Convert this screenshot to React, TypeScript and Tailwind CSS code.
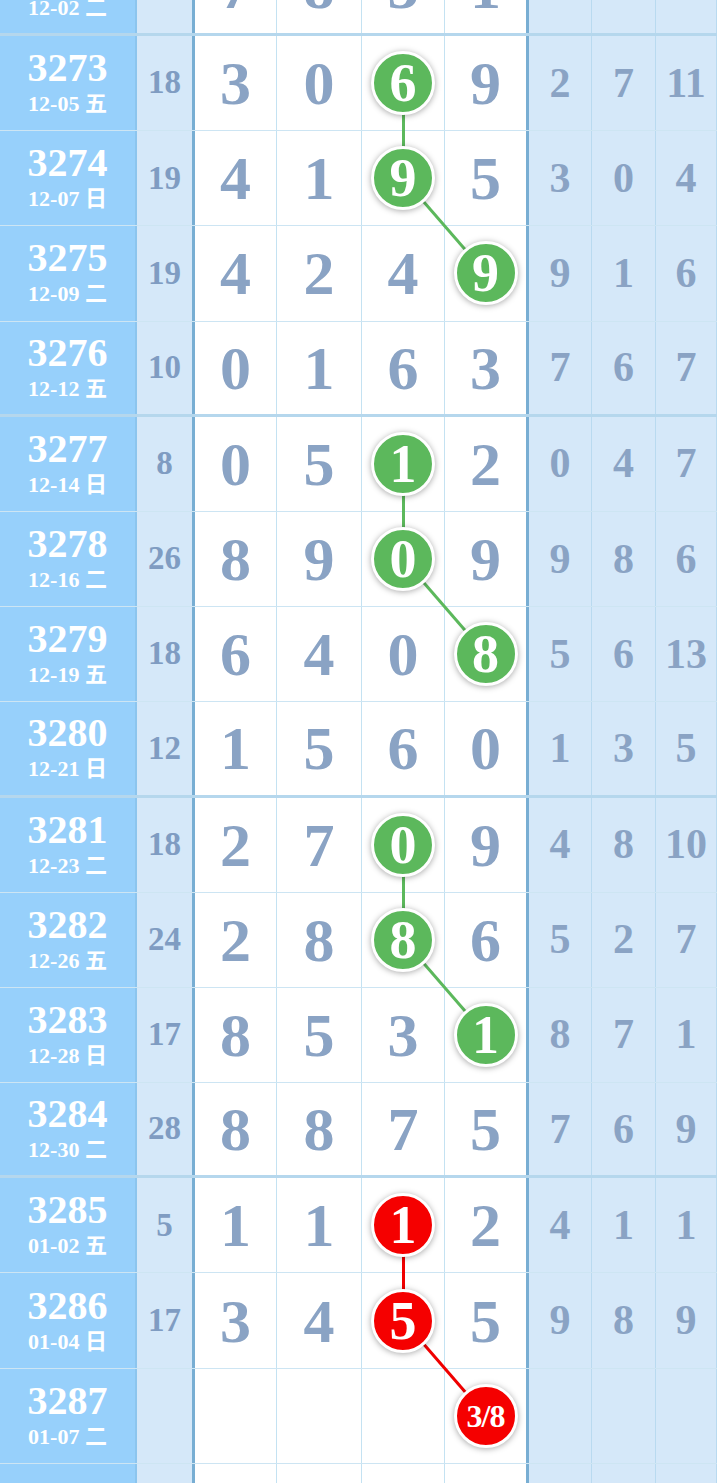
import React from 'react';

interface Row {
  no: string;
  date: string;
  sum: string;
  nums: string[];
  rest: string[];
}

const rows: Row[] = [
  { no: '3272', date: '12-02 二', sum: '', nums: ['7', '8', '3', '1'], rest: ['6', '3', '3'] },
  { no: '3273', date: '12-05 五', sum: '18', nums: ['3', '0', '6', '9'], rest: ['2', '7', '11'] },
  { no: '3274', date: '12-07 日', sum: '19', nums: ['4', '1', '9', '5'], rest: ['3', '0', '4'] },
  { no: '3275', date: '12-09 二', sum: '19', nums: ['4', '2', '4', '9'], rest: ['9', '1', '6'] },
  { no: '3276', date: '12-12 五', sum: '10', nums: ['0', '1', '6', '3'], rest: ['7', '6', '7'] },
  { no: '3277', date: '12-14 日', sum: '8', nums: ['0', '5', '1', '2'], rest: ['0', '4', '7'] },
  { no: '3278', date: '12-16 二', sum: '26', nums: ['8', '9', '0', '9'], rest: ['9', '8', '6'] },
  { no: '3279', date: '12-19 五', sum: '18', nums: ['6', '4', '0', '8'], rest: ['5', '6', '13'] },
  { no: '3280', date: '12-21 日', sum: '12', nums: ['1', '5', '6', '0'], rest: ['1', '3', '5'] },
  { no: '3281', date: '12-23 二', sum: '18', nums: ['2', '7', '0', '9'], rest: ['4', '8', '10'] },
  { no: '3282', date: '12-26 五', sum: '24', nums: ['2', '8', '8', '6'], rest: ['5', '2', '7'] },
  { no: '3283', date: '12-28 日', sum: '17', nums: ['8', '5', '3', '1'], rest: ['8', '7', '1'] },
  { no: '3284', date: '12-30 二', sum: '28', nums: ['8', '8', '7', '5'], rest: ['7', '6', '9'] },
  { no: '3285', date: '01-02 五', sum: '5', nums: ['1', '1', '1', '2'], rest: ['4', '1', '1'] },
  { no: '3286', date: '01-04 日', sum: '17', nums: ['3', '4', '5', '5'], rest: ['9', '8', '9'] },
  { no: '3287', date: '01-07 二', sum: '', nums: ['', '', '', '3/8'], rest: ['', '', ''] },
  { no: '', date: '', sum: '', nums: ['', '', '', ''], rest: ['', '', ''] },
];

// circled picks: row index -> column index
const picks: { row: number; col: number; red?: boolean }[] = [
  { row: 1, col: 2 },
  { row: 2, col: 2 },
  { row: 3, col: 3 },
  { row: 5, col: 2 },
  { row: 6, col: 2 },
  { row: 7, col: 3 },
  { row: 9, col: 2 },
  { row: 10, col: 2 },
  { row: 11, col: 3 },
  { row: 13, col: 2, red: true },
  { row: 14, col: 2, red: true },
  { row: 15, col: 3, red: true },
];

const ROW_H = 95.2;
const colCenters = [236, 319.5, 403.5, 486];
const numWidths = ['w-[82px]', 'w-[85px]', 'w-[83px]', 'w-[84px]'];
const restWidths = ['w-[63px]', 'w-[64px]', 'w-[61px]'];

const groupEnd = (i: number) => i % 4 === 0;

export default function App() {
  const pickAt = (row: number, col: number) => picks.find((p) => p.row === row && p.col === col);

  const lines: { x1: number; y1: number; x2: number; y2: number; red?: boolean }[] = [];
  for (let k = 0; k < picks.length; k += 3) {
    for (let j = 0; j < 2; j++) {
      const a = picks[k + j];
      const b = picks[k + j + 1];
      lines.push({
        x1: colCenters[a.col],
        y1: a.row * ROW_H + 47,
        x2: colCenters[b.col],
        y2: b.row * ROW_H + 47,
        red: a.red,
      });
    }
  }

  return (
    <div className="h-[1483px] w-[717px] overflow-hidden bg-white font-['Liberation_Serif','Noto_Sans_CJK_SC',serif] font-bold">
      <div className="relative -mt-[59.2px]">
        {rows.map((r, i) => (
          <div
            key={i}
            className={`box-border flex h-[95.2px] ${
              groupEnd(i) ? 'border-b-[3px] border-[rgba(120,182,222,0.55)]' : 'border-b-[1.5px] border-[rgba(130,190,225,0.4)]'
            }`}
          >
            <div className="flex w-[137px] shrink-0 flex-col items-center justify-center border-r-2 border-[#8cc5ee] bg-[#97d0fb] pb-[2px] text-white">
              <span className="text-[40px] leading-[40px]">{r.no}</span>
              <span className="mt-[4px] text-[22px] leading-[24px]">{r.date}</span>
            </div>
            <div className="flex w-[58px] shrink-0 items-center justify-center border-r-[3px] border-[#78aed3] bg-[#d5e8f9] text-[33px] text-[#7f9cc2]">
              {r.sum}
            </div>
            {r.nums.map((n, c) => {
              const p = pickAt(i, c);
              return (
                <div
                  key={c}
                  className={`flex ${numWidths[c]} shrink-0 items-center justify-center bg-white text-[62px] leading-none text-[#8aa3c4] ${
                    c === 3 ? 'border-r-[3px] border-[#78aed3]' : 'border-r border-[#c4e2f2]'
                  }`}
                >
                  {p ? (
                    <span
                      className={`relative z-10 flex h-[64px] w-[64px] items-center justify-center rounded-full border-[3px] border-white text-white shadow-[0_1px_6px_rgba(0,0,0,0.35)] ${
                        p.red ? 'bg-[#f50000]' : 'bg-[#5cb85c]'
                      } ${n.length > 1 ? 'text-[32px] tracking-[-1px]' : 'text-[54px]'}`}
                    >
                      {n}
                    </span>
                  ) : (
                    n
                  )}
                </div>
              );
            })}
            {r.rest.map((n, c) => (
              <div
                key={c}
                className={`flex ${restWidths[c]} shrink-0 items-center justify-center border-r border-[#b9daf0] bg-[#d5e8f9] text-[42px] text-[#8aa3c4]`}
              >
                {n}
              </div>
            ))}
          </div>
        ))}
        <svg className="pointer-events-none absolute left-0 top-0 h-full w-full">
          {lines.map((l, k) => (
            <line key={k} x1={l.x1} y1={l.y1} x2={l.x2} y2={l.y2} stroke={l.red ? '#f00000' : '#5cb85c'} strokeWidth={3} />
          ))}
        </svg>
      </div>
    </div>
  );
}
